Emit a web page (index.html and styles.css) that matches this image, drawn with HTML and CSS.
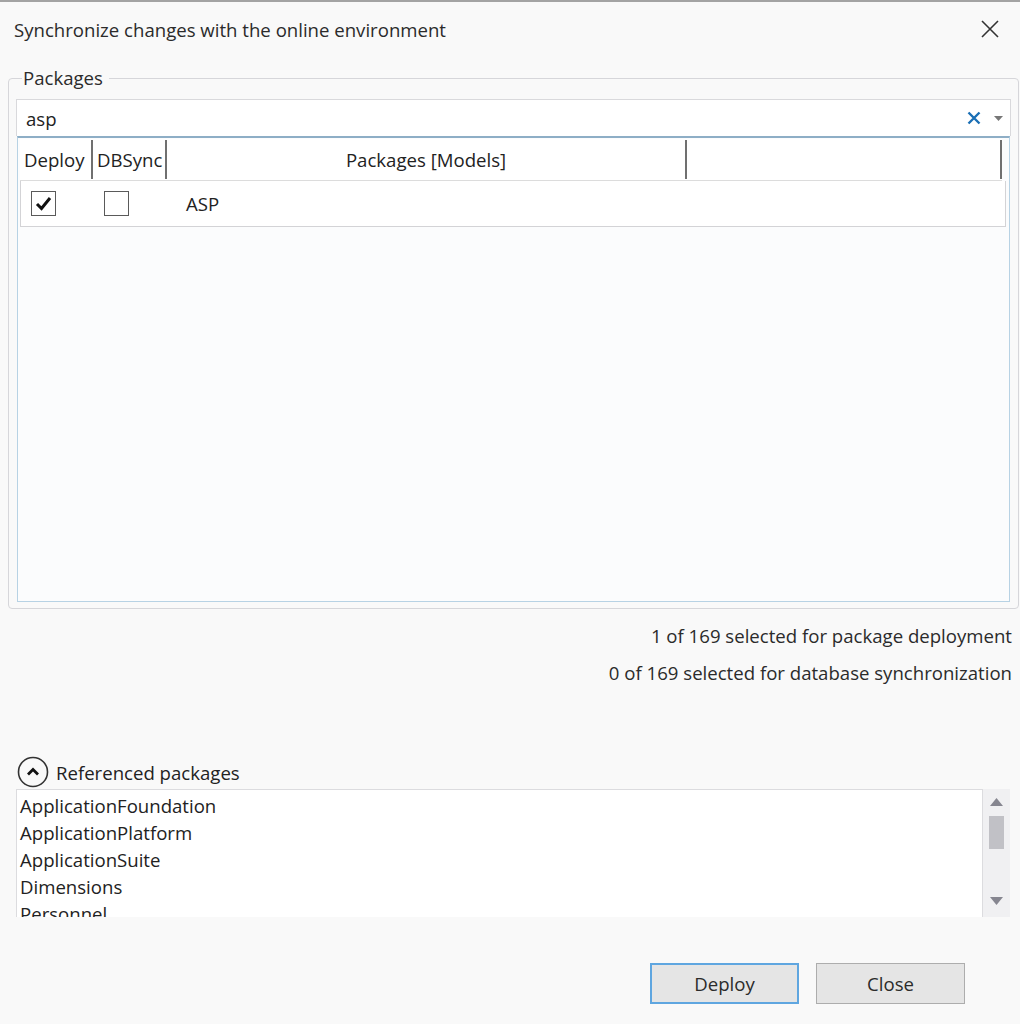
FILE: index.html
```html
<!DOCTYPE html>
<html lang="en">
<head>
    <meta charset="UTF-8">
    <meta name="viewport" content="width=device-width, initial-scale=1.0">
    <title>Synchronize changes</title>
    <link rel="stylesheet" href="styles.css">
</head>
<body>
    <div class="dialog">
        <div class="titlebar">
            <span class="title">Synchronize changes with the online environment</span>
            <span class="close-btn">
                <svg width="18" height="18" viewBox="0 0 18 18"><path d="M1 1 L17 17 M17 1 L1 17" stroke="#333" stroke-width="1.6" fill="none"/></svg>
            </span>
        </div>

        <fieldset class="packages">
            <legend>Packages</legend>
            <div class="search">
                <span class="search-text">asp</span>
                <svg class="clear" width="14" height="14" viewBox="0 0 14 14"><path d="M1.5 1.5 L12.5 12.5 M12.5 1.5 L1.5 12.5" stroke="#1a6fb5" stroke-width="2.4" fill="none"/></svg>
                <svg class="drop" width="9" height="5" viewBox="0 0 9 5"><path d="M0 0 H9 L4.5 5 Z" fill="#777"/></svg>
            </div>
            <div class="grid">
                <div class="grid-head">
                    <div class="col col-deploy">Deploy</div>
                    <div class="col col-dbsync">DBSync</div>
                    <div class="col col-name">Packages [Models]</div>
                    <div class="col col-extra"></div>
                </div>
                <div class="grid-row">
                    <div class="cell col-deploy">
                        <span class="check">
                            <svg width="17" height="15" viewBox="0 0 17 15"><path d="M2 8 L6.5 12.5 L15 2" stroke="#111" stroke-width="3" fill="none"/></svg>
                        </span>
                    </div>
                    <div class="cell col-dbsync"><span class="check"></span></div>
                    <div class="cell col-name">ASP</div>
                </div>
            </div>
        </fieldset>

        <div class="summary">
            <p>1 of 169 selected for package deployment</p>
            <p>0 of 169 selected for database synchronization</p>
        </div>

        <div class="refs">
            <div class="refs-head">
                <svg class="collapse" width="32" height="32" viewBox="0 0 32 32"><circle cx="16" cy="16" r="14.5" stroke="#333" stroke-width="1.6" fill="none"/><path d="M11 18.5 L16 13.5 L21 18.5" stroke="#111" stroke-width="2.8" fill="none"/></svg>
                <span>Referenced packages</span>
            </div>
            <div class="refs-box">
                <ul class="refs-list">
                    <li>ApplicationFoundation</li>
                    <li>ApplicationPlatform</li>
                    <li>ApplicationSuite</li>
                    <li>Dimensions</li>
                    <li>Personnel</li>
                </ul>
                <div class="scrollbar">
                    <svg width="13" height="8" viewBox="0 0 13 8"><path d="M0 8 L6.5 0 L13 8 Z" fill="#868690"/></svg>
                    <div class="thumb"></div>
                    <svg class="down" width="13" height="8" viewBox="0 0 13 8"><path d="M0 0 L6.5 8 L13 0 Z" fill="#868690"/></svg>
                </div>
            </div>
        </div>

        <div class="actions">
            <button class="btn btn-default">Deploy</button>
            <button class="btn">Close</button>
        </div>
    </div>
</body>
</html>
```

FILE: styles.css
```css
body {
    margin: 0;
    background-color: #f9f9f9;
    color: #222222;
    font-family: "Open Sans", "Noto Sans", sans-serif;
    font-size: 18.6px;
}
.dialog {
    width: 1020px;
    height: 1024px;
    border-top: 2px solid #a3a3a3;
    box-sizing: border-box;
}
.titlebar {
    height: 54px;
    display: flex;
    align-items: center;
    justify-content: space-between;
    padding: 0 21px 0 14px;
}
.title {
    color: #2b2b2b;
}
.close-btn {
    display: flex;
}

/* Packages group */
.packages {
    margin: 10px 2px 0 8px;
    padding: 9px 7px 6px 7px;
    border: 1px solid #d6d6da;
    border-radius: 4px;
}
.packages legend {
    margin-left: 6px;
    padding: 0 6px 0 1px;
    line-height: 24px;
    color: #2b2b2b;
}
.search {
    height: 37px;
    box-sizing: border-box;
    background-color: #ffffff;
    border: 1px solid #d9d9dc;
    border-bottom: none;
    display: flex;
    align-items: center;
    padding: 0 7px 0 9px;
}
.search-text {
    flex: 1;
}
.clear {
    margin-right: 13px;
}
.grid {
    height: 466px;
    box-sizing: border-box;
    margin: 0 1px;
    border: 1px solid #b7d2e4;
    border-top: 2px solid #8eaec6;
    background-color: #fbfcfd;
    padding: 1px 3px 0 2px;
}
.grid-head {
    display: flex;
    height: 41px;
    border-bottom: 1px solid #dcdcdc;
    background-color: #ffffff;
    margin-right: 4px;
}
.col {
    box-sizing: border-box;
    display: flex;
    align-items: center;
    padding-left: 4px;
    border-right: 2px solid #707070;
    margin-bottom: 1px;
    margin-top: 1px;
    white-space: nowrap;
}
.col-deploy {
    width: 73px;
}
.col-dbsync {
    width: 74px;
}
.col-name {
    width: 520px;
}
.grid-head .col-name {
    justify-content: center;
    padding-left: 0;
}
.col-extra {
    width: 315px;
}
.grid-row {
    display: flex;
    height: 46px;
    box-sizing: border-box;
    background-color: #ffffff;
    border: 1px solid #d3d3d6;
    border-top: none;
}
.cell {
    display: flex;
    align-items: center;
    box-sizing: border-box;
}
.grid-row .col-deploy,
.grid-row .col-dbsync {
    padding-left: 10px;
}
.grid-row .col-name {
    padding-left: 18px;
}
.check {
    width: 25px;
    height: 25px;
    box-sizing: border-box;
    border: 1px solid #5a5a5a;
    background-color: #ffffff;
    display: flex;
    align-items: center;
    justify-content: center;
}

/* Selection summary */
.summary {
    margin-top: 15px;
    padding-right: 8px;
    text-align: right;
    color: #2b2b2b;
}
.summary p {
    margin: 0 0 13px 0;
    line-height: 24px;
}

/* Referenced packages */
.refs {
    margin-top: 71px;
    padding: 0 10px 0 16px;
}
.refs-head {
    display: flex;
    align-items: center;
    gap: 7px;
    height: 32px;
    margin-left: 1px;
}
.refs-box {
    display: flex;
    height: 128px;
    margin-top: 1px;
}
.refs-list {
    flex: 1;
    margin: 0;
    padding: 2px 0 0 3px;
    list-style: none;
    background-color: #ffffff;
    border: 1px solid #dcdcdf;
    border-bottom: none;
    overflow: hidden;
}
.refs-list li {
    line-height: 27px;
    white-space: nowrap;
}
.scrollbar {
    width: 27px;
    background-color: #f0f0f2;
    display: flex;
    flex-direction: column;
    align-items: center;
    padding-top: 9px;
    box-sizing: border-box;
}
.thumb {
    width: 15px;
    height: 33px;
    margin-top: 10px;
    background-color: #c1c1c6;
}
.scrollbar .down {
    margin-top: auto;
    margin-bottom: 12px;
}

/* Buttons */
.actions {
    display: flex;
    justify-content: flex-end;
    gap: 17px;
    margin-top: 46px;
    padding-right: 55px;
}
.btn {
    width: 149px;
    height: 41px;
    font-family: inherit;
    font-size: 18.6px;
    color: #2b2b2b;
    background-color: #e5e5e5;
    border: 1px solid #adadad;
}
.btn-default {
    border: 2px solid #5fa6e0;
}
```
